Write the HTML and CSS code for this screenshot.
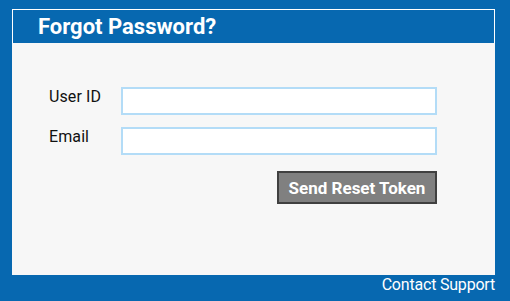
FILE: index.html
```html
<!DOCTYPE html>
<html>
<head>
<meta charset="utf-8">
<link rel="stylesheet" href="styles.css">
</head>
<body>
<div class="page">
  <div class="card">
    <div class="card-header">Forgot Password?</div>
    <div class="card-body">
      <form class="form">
        <label class="label" for="uid">User ID</label>
        <input class="input" id="uid" type="text">
        <label class="label" for="email">Email</label>
        <input class="input" id="email" type="text">
        <div class="actions">
          <button type="button" class="btn">Send Reset Token</button>
        </div>
      </form>
    </div>
  </div>
  <div class="footer"><a class="support" href="#">Contact Support</a></div>
</div>
</body>
</html>
```
FILE: styles.css
```css
html, body {
  margin: 0;
  padding: 0;
  background: #0768b0;
  font-family: Roboto, "Liberation Sans", sans-serif;
}
.page {
  width: 483px;
  padding: 9px 0 0 12px;
}
.card {
  display: flex;
  flex-direction: column;
}
.card-header {
  height: 33px;
  border: 1px solid #ffffff;
  border-bottom: none;
  background: #0768b0;
  color: #ffffff;
  font-weight: 700;
  font-size: 22px;
  line-height: 33px;
  padding-left: 25px;
}
.card-body {
  height: 232px;
  background: #f7f7f7;
  box-sizing: border-box;
  padding: 44px 0 0 37px;
}
.form {
  display: grid;
  grid-template-columns: 72px 316px;
  row-gap: 12px;
  align-items: start;
  margin: 0;
}
.label {
  font-size: 16px;
  color: #111111;
  line-height: 19px;
  letter-spacing: 0.1px;
}
.input {
  box-sizing: border-box;
  width: 316px;
  height: 28px;
  margin: 0;
  border: 2px solid #b3dcf7;
  background: #ffffff;
  outline: none;
  padding: 0 6px;
  font-family: inherit;
  font-size: 14px;
}
.actions {
  grid-column: 1 / 3;
  display: flex;
  justify-content: flex-end;
  margin-top: 4px;
}
.btn {
  box-sizing: border-box;
  width: 160px;
  height: 33px;
  border: 2px solid #404040;
  background: #808080;
  color: #ffffff;
  font-family: inherit;
  font-weight: 700;
  font-size: 17px;
  padding: 0;
  margin: 0;
}
.footer {
  display: flex;
  justify-content: flex-end;
}
.support {
  color: #ffffff;
  text-decoration: none;
  font-size: 16px;
  line-height: 19px;
  letter-spacing: -0.2px;
}
```
